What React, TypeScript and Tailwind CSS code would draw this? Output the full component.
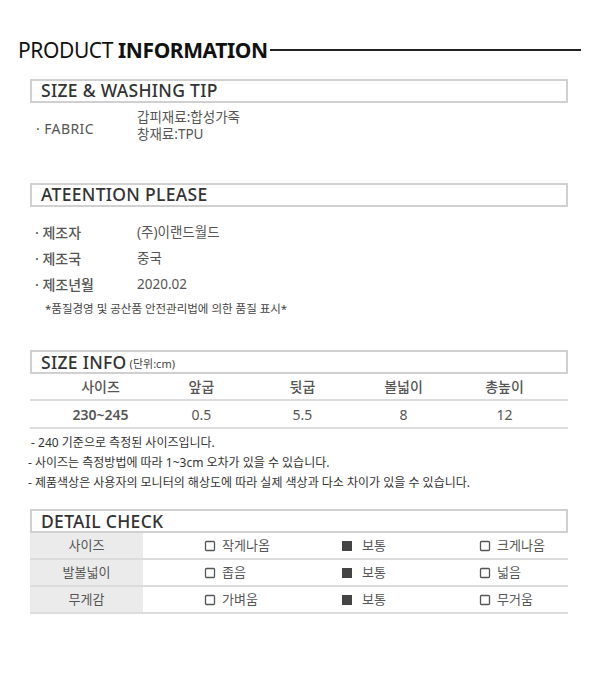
import { Square } from 'lucide-react'

const kr = { fontFamily: '"Noto Sans", "Noto Sans CJK KR", sans-serif' }

function SectionBox({ title, sub }: { title: string; sub?: string }) {
  return (
    <div className="h-[24px] border-2 border-[#d0d0d0] flex items-center pl-[9px]">
      <span className="text-[17.5px] leading-none font-medium text-[#333] tracking-[0.3px]">{title}</span>
      {sub && <span className="ml-[3px] text-[11px] text-[#444] mt-[3px]">{sub}</span>}
    </div>
  )
}

const sizeHead = ['사이즈', '앞굽', '뒷굽', '볼넓이', '총높이']
const sizeVals = ['230~245', '0.5', '5.5', '8', '12']

const checks = [
  { label: '사이즈', opts: ['작게나옴', '보통', '크게나옴'] },
  { label: '발볼넓이', opts: ['좁음', '보통', '넓음'] },
  { label: '무게감', opts: ['가벼움', '보통', '무거움'] },
]

export default function App() {
  return (
    <div className="w-[600px] h-[676px] bg-white text-[#444]" style={kr}>
      <div className="flex items-center pl-[18px] pr-[19px] pt-[37px]">
        <span className="text-[21px] leading-[26px] text-[#111] tracking-[-0.4px]">
          PRODUCT <span className="font-bold">INFORMATION</span>
        </span>
        <div className="flex-1 h-[2px] bg-[#222] ml-[2px]" />
      </div>

      <div className="ml-[30px] mr-[32px] mt-[16px]">
        <SectionBox title="SIZE & WASHING TIP" />
        <div className="flex mt-[6px]">
          <div className="w-[107px] pl-[6px] pt-[9px] text-[14px] tracking-[0.4px] text-[#555]">· FABRIC</div>
          <div className="text-[13.5px] leading-[17px] text-[#555]">
            <div>갑피재료:합성가죽</div>
            <div>창재료:TPU</div>
          </div>
        </div>
      </div>

      <div className="ml-[30px] mr-[32px] mt-[40px]">
        <SectionBox title="ATEENTION PLEASE" />
        <div className="mt-[12px] text-[13.5px] text-[#555]">
          {[
            ['제조자', '(주)이랜드월드'],
            ['제조국', '중국'],
            ['제조년월', '2020.02'],
          ].map(([k, v]) => (
            <div key={k} className="flex h-[26px] items-center">
              <div className="w-[107px] pl-[5px] text-[14px] font-medium text-[#555]">· {k}</div>
              <div>{v}</div>
            </div>
          ))}
          <div className="pl-[15px] mt-[3px] text-[11.5px] text-[#444]">*품질경영 및 공산품 안전관리법에 의한 품질 표시*</div>
        </div>
      </div>

      <div className="ml-[30px] mr-[32px] mt-[33px]">
        <SectionBox title="SIZE INFO" sub="(단위:cm)" />
        <div className="grid grid-cols-5 pl-[20px] pr-[13px] h-[27px] items-center border-b-2 border-[#dcdcdc] text-[14px] font-medium text-[#555]">
          {sizeHead.map((h) => (
            <div key={h} className="text-center">{h}</div>
          ))}
        </div>
        <div className="grid grid-cols-5 pl-[20px] pr-[13px] h-[28px] items-center border-b-2 border-[#dcdcdc] text-[14px] text-[#555]">
          {sizeVals.map((v, i) => (
            <div key={v} className={i === 0 ? 'text-center font-semibold' : 'text-center'}>{v}</div>
          ))}
        </div>
        <div className="mt-[4px] text-[12px] leading-[20px] text-[#333] -ml-[2px]">
          <div>&nbsp;- 240 기준으로 측정된 사이즈입니다.</div>
          <div>- 사이즈는 측정방법에 따라 1~3cm 오차가 있을 수 있습니다.</div>
          <div>- 제품색상은 사용자의 모니터의 해상도에 따라 실제 색상과 다소 차이가 있을 수 있습니다.</div>
        </div>
      </div>

      <div className="ml-[30px] mr-[32px] mt-[16px]">
        <SectionBox title="DETAIL CHECK" />
        {checks.map((row) => (
          <div key={row.label} className="flex h-[27px] border-b-2 border-[#dcdcdc] text-[13px] text-[#555]">
            <div className="w-[113px] bg-[#ebebeb] flex items-center justify-center">{row.label}</div>
            <div className="flex-1 flex items-center">
              {row.opts.map((o, i) => (
                <div
                  key={o + i}
                  className={
                    i === 0 ? 'w-[199px] pl-[62px] flex items-center' : i === 1 ? 'w-[138px] flex items-center' : 'flex items-center'
                  }
                >
                  {i === 1 ? (
                    <span className="inline-block w-[10px] h-[10px] bg-[#444]" />
                  ) : (
                    <Square size={12} strokeWidth={1.3} className="text-[#555] -ml-[1px]" absoluteStrokeWidth />
                  )}
                  <span className={i === 1 ? 'ml-[10px]' : 'ml-[6px]'}>{o}</span>
                </div>
              ))}
            </div>
          </div>
        ))}
      </div>
    </div>
  )
}
